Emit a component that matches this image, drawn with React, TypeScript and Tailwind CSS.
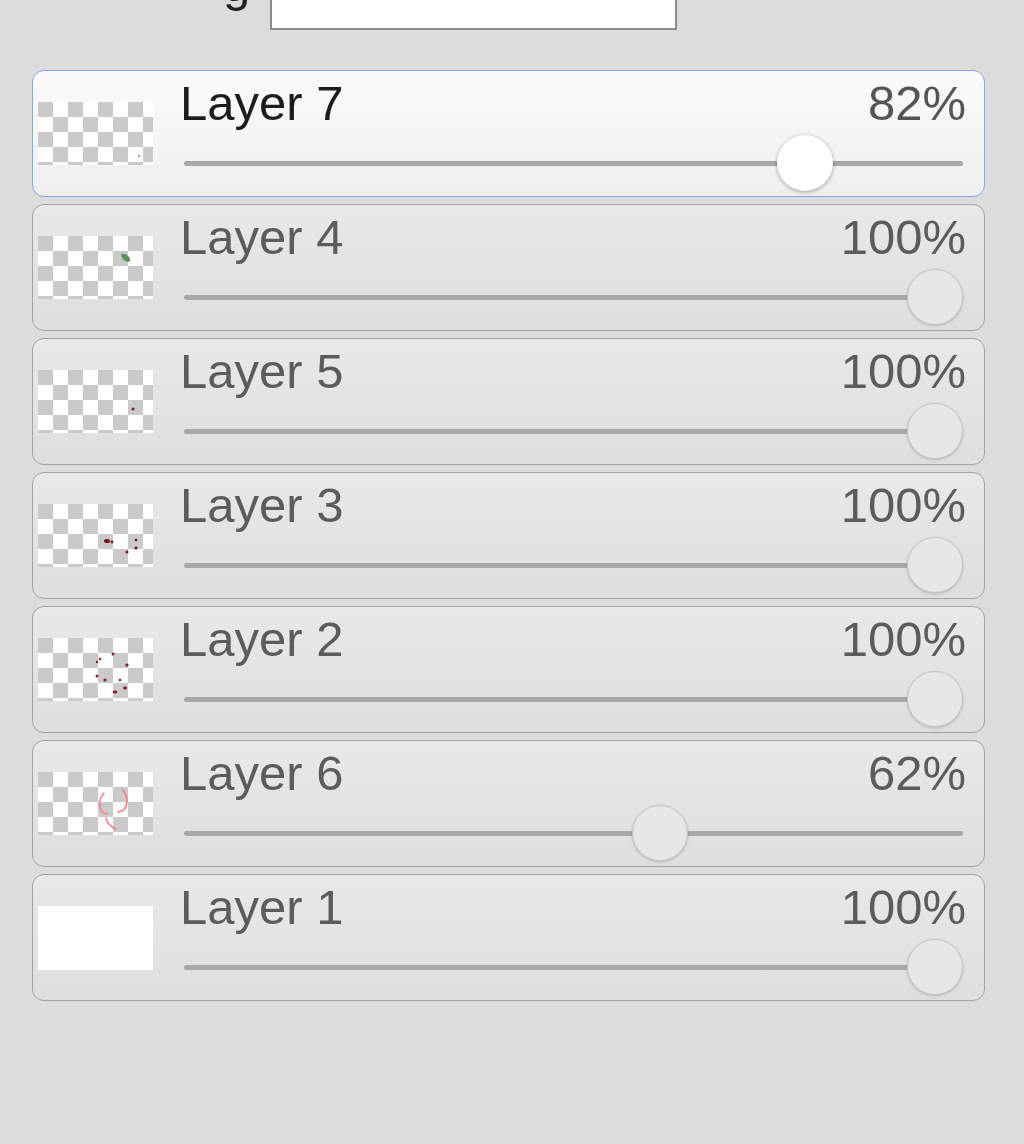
type Layer = {
  name: string;
  opacity: number;
  selected?: boolean;
  blank?: boolean;
  marks?: React.ReactNode;
};

const layers: Layer[] = [
  {
    name: "Layer 7",
    opacity: 82,
    selected: true,
    marks: <circle cx={101} cy={54} r={1.2} fill="#e28a8a" />,
  },
  {
    name: "Layer 4",
    opacity: 100,
    marks: (
      <path d="M83 18 Q88 17 91 21 Q94 25 90 26 Q86 25 84 22 Z" fill="#5f8f5c" />
    ),
  },
  {
    name: "Layer 5",
    opacity: 100,
    marks: <circle cx={95} cy={39} r={1.6} fill="#8b1a1a" />,
  },
  {
    name: "Layer 3",
    opacity: 100,
    marks: (
      <g fill="#7a1010">
        <ellipse cx={69} cy={37} rx={3} ry={2} />
        <circle cx={74} cy={38} r={1.4} />
        <circle cx={89} cy={48} r={1.5} />
        <circle cx={98} cy={36} r={1.3} />
        <circle cx={98} cy={44} r={1.6} />
      </g>
    ),
  },
  {
    name: "Layer 2",
    opacity: 100,
    marks: (
      <g fill="#8b1a1a">
        <circle cx={62} cy={21} r={1.3} />
        <circle cx={59} cy={24} r={1.2} />
        <circle cx={75} cy={16} r={1.5} />
        <circle cx={89} cy={27} r={1.6} />
        <circle cx={59} cy={38} r={1.5} />
        <circle cx={67} cy={42} r={1.6} />
        <circle cx={82} cy={42} r={1.3} />
        <circle cx={87} cy={50} r={1.8} />
        <ellipse cx={77} cy={54} rx={2.4} ry={1.6} />
      </g>
    ),
  },
  {
    name: "Layer 6",
    opacity: 62,
    marks: (
      <g fill="none" stroke="#ff7f86" strokeWidth={1.6} strokeLinecap="round">
        <path d="M66 21 Q58 30 64 40 L69 42" />
        <path d="M84 17 Q93 27 86 38 L80 40" />
        <path d="M68 46 Q70 54 78 57" />
      </g>
    ),
  },
  { name: "Layer 1", opacity: 100, blank: true },
];

function Thumb({ layer }: { layer: Layer }) {
  if (layer.blank) return <div className="h-[64px] w-[115px] shrink-0 bg-white" />;
  return (
    <svg width={115} height={63} className="shrink-0">
      <defs>
        <pattern id="checker" width={30} height={30} patternUnits="userSpaceOnUse">
          <rect width={30} height={30} fill="#ffffff" />
          <rect width={15} height={15} fill="#cacaca" />
          <rect x={15} y={15} width={15} height={15} fill="#cacaca" />
        </pattern>
      </defs>
      <rect width={115} height={63} fill="url(#checker)" />
      {layer.marks}
    </svg>
  );
}

function LayerRow({ layer }: { layer: Layer }) {
  const sel = layer.selected;
  return (
    <div
      className={
        sel
          ? "flex h-[127px] items-center rounded-[12px] border border-[#7fa8ee] bg-gradient-to-b from-[#fbfbfb] to-[#efefef] pl-[5px] pr-[18px]"
          : "flex h-[127px] items-center rounded-[12px] border border-[#a2a2a2] bg-gradient-to-b from-[#e9e9e9] to-[#dedede] pl-[5px] pr-[18px]"
      }
    >
      <Thumb layer={layer} />
      <div className="ml-[27px] flex h-full flex-1 flex-col pt-[8px]">
        <div
          className={
            sel
              ? "flex justify-between text-[49px] leading-[49px] text-[#1c1c1c]"
              : "flex justify-between text-[49px] leading-[49px] text-[#5c5c5c]"
          }
        >
          <span>{layer.name}</span>
          <span className={sel ? "text-[#555555]" : ""}>{layer.opacity}%</span>
        </div>
        <div className="relative ml-[4px] mr-[3px] mt-[7px] flex h-[56px] items-center">
          <div className="h-[5px] w-full rounded-full bg-[#a8a8a8]" />
          <div
            className={
              sel
                ? "absolute top-0 h-[56px] w-[56px] rounded-full bg-white shadow-[0_1px_4px_rgba(0,0,0,0.35)]"
                : "absolute top-0 h-[56px] w-[56px] rounded-full border border-[#c6c6c6] bg-[#e7e7e7] shadow-[0_1px_3px_rgba(0,0,0,0.2)]"
            }
            style={{ left: `${(layer.opacity / 100) * 723}px` }}
          />
        </div>
      </div>
    </div>
  );
}

export default function App() {
  return (
    <div
      className="h-[1144px] w-[1024px] overflow-hidden bg-[#dcdcdc]"
      style={{ fontFamily: '"Liberation Sans", Arial, sans-serif' }}
    >
      <div className="flex h-[30px] items-end pl-[223px]">
        <span className="-mt-[40px] self-start text-[49px] leading-[49px] text-[#222222]">g</span>
        <input
          className="ml-[20px] h-[42px] w-[407px] border-2 border-[#8c8c8c] bg-white"
          readOnly
        />
      </div>
      <div className="mt-[40px] flex w-[953px] flex-col gap-[7px] ml-[32px]">
        {layers.map((l) => (
          <LayerRow key={l.name} layer={l} />
        ))}
      </div>
    </div>
  );
}
